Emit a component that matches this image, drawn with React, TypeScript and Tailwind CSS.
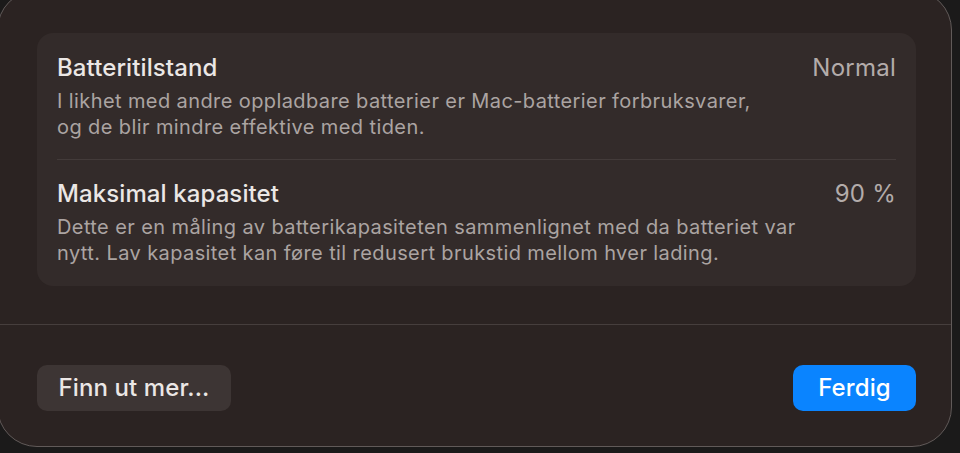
const font = { fontFamily: 'Inter, "Noto Sans", sans-serif' }

type InfoRowProps = {
  title: string
  value: string
  lines: string[]
}

function InfoRow({ title, value, lines }: InfoRowProps) {
  return (
    <div className="flex items-start justify-between">
      <div>
        <div className="text-[24px] font-medium leading-[26px] tracking-[0.1px] text-[#ebe7e5]">{title}</div>
        <div className="mt-[7px] text-[20px] leading-[26px] tracking-[0.4px] text-[#aba4a2]">
          {lines.map((line) => (
            <div key={line}>{line}</div>
          ))}
        </div>
      </div>
      <div className="text-[24px] leading-[26px] tracking-[0.25px] text-[#b3acaa]">{value}</div>
    </div>
  )
}

export default function App() {
  return (
    <div className="h-[453px] w-[960px] overflow-hidden bg-[#1b1a1a]" style={font}>
      <div className="-ml-[3px] -mt-[10px] h-[457px] w-[955px] rounded-[40px] border border-[#615a59] bg-[#2b2322]">
        <div className="ml-[39px] mr-[35px] mt-[42px] rounded-[16px] bg-[#332b2a] px-5">
          <div className="pb-[19px] pt-[22px]">
            <InfoRow
              title="Batteritilstand"
              value="Normal"
              lines={[
                'I likhet med andre oppladbare batterier er Mac-batterier forbruksvarer,',
                'og de blir mindre effektive med tiden.',
              ]}
            />
          </div>
          <div className="h-px bg-[#433b3a]" />
          <div className="pb-[20px] pt-[21px]">
            <InfoRow
              title="Maksimal kapasitet"
              value="90 %"
              lines={[
                'Dette er en måling av batterikapasiteten sammenlignet med da batteriet var',
                'nytt. Lav kapasitet kan føre til redusert brukstid mellom hver lading.',
              ]}
            />
          </div>
        </div>
        <div className="mt-[38px] h-px bg-[#463e3d]" />
        <div className="ml-[39px] mr-[35px] mt-[40px] flex items-center justify-between">
          <button className="h-[46px] w-[194px] rounded-[10px] bg-[#3d3534] text-[24px] font-medium tracking-[0.1px] text-[#ebe7e5]">
            Finn ut mer...
          </button>
          <button className="h-[46px] w-[123px] rounded-[10px] bg-[#0a84ff] text-[24px] font-medium tracking-[0.1px] text-white">
            Ferdig
          </button>
        </div>
      </div>
    </div>
  )
}
